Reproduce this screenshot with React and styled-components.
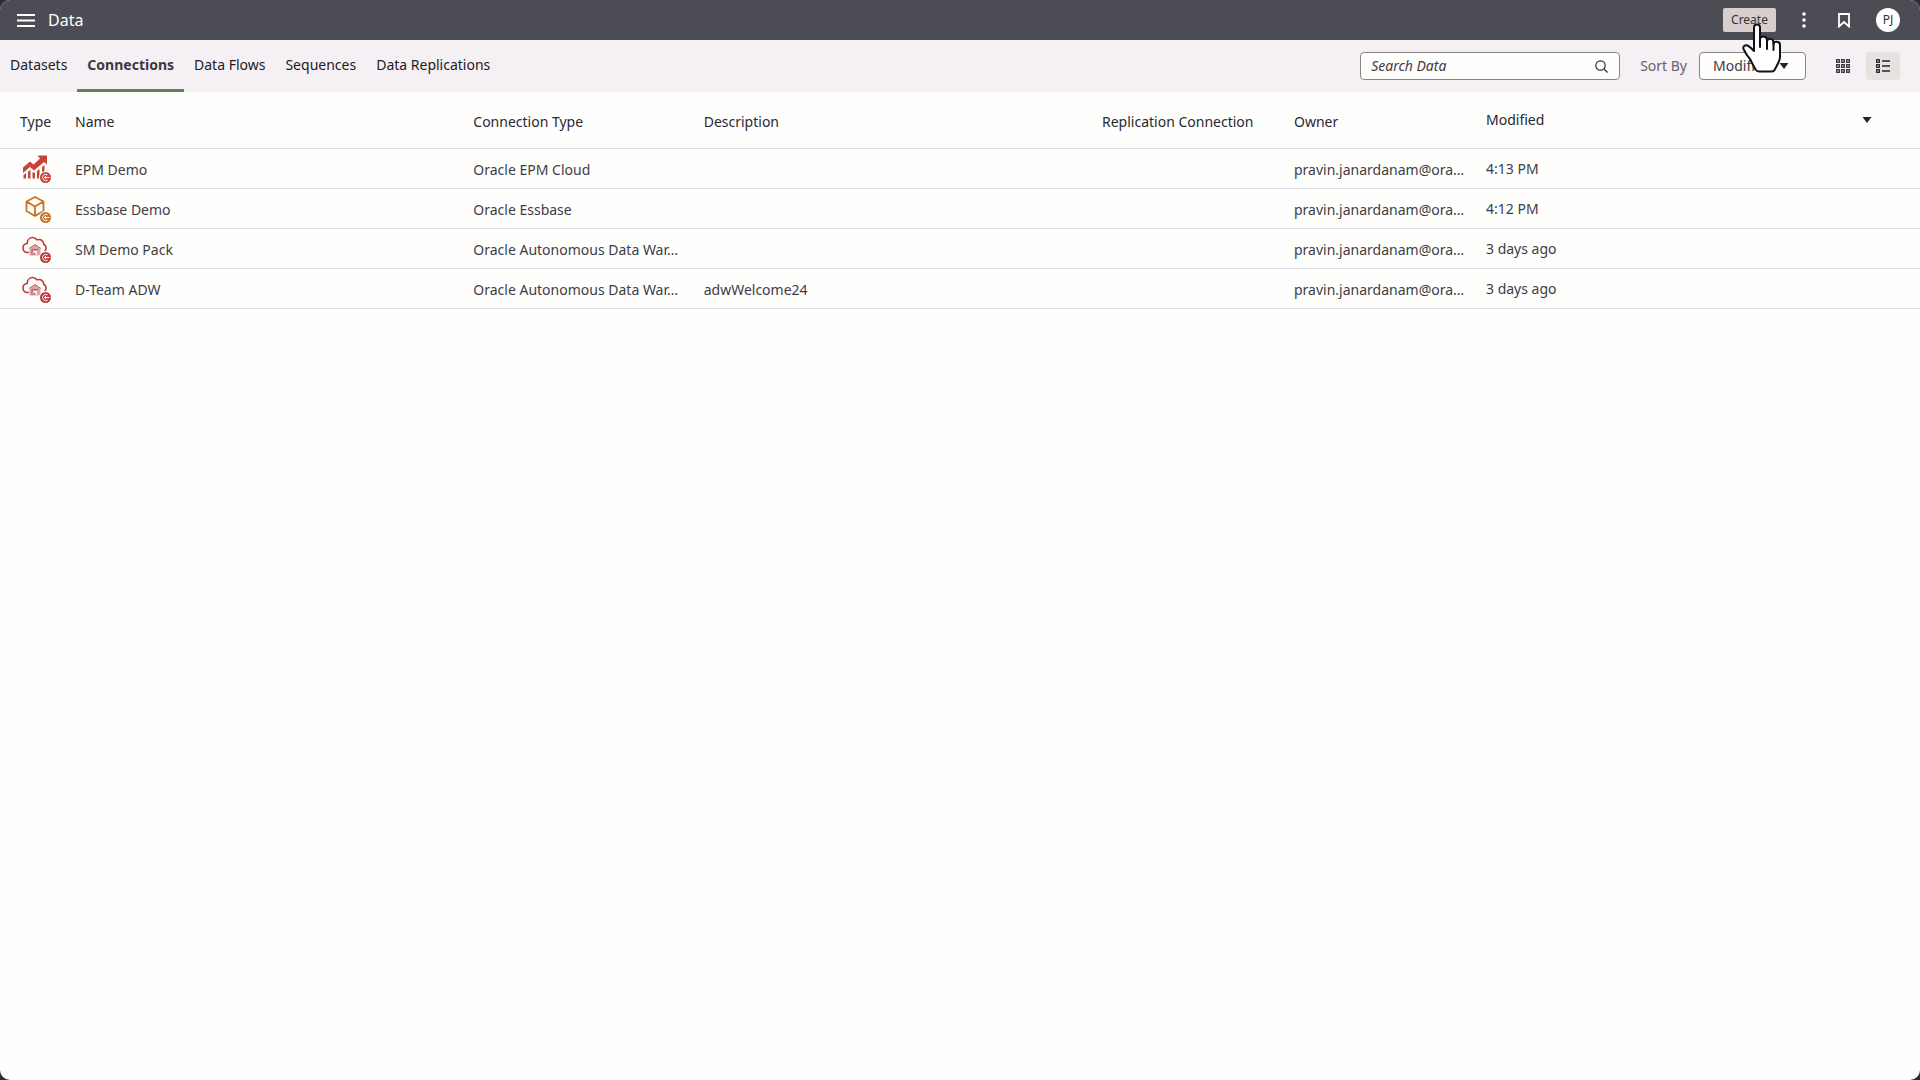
import React from "react";
import styled, { createGlobalStyle } from "styled-components";

const GlobalStyle = createGlobalStyle`
  *, *::before, *::after { box-sizing: border-box; }
  body {
    margin: 0;
    background: #2b2d35;
    color: #3f3d45;
    font-family: "Noto Sans", "Open Sans", sans-serif;
    font-size: 14px;
    line-height: 20px;
  }
  button, input, select { font: inherit; color: inherit; }
`;

const Page = styled.div`
  display: flex;
  flex-direction: column;
  min-height: 100vh;
  overflow: hidden;
  border-radius: 10px;
  background: #fefefd;
`;

const TopBar = styled.header`
  display: flex;
  align-items: center;
  justify-content: space-between;
  height: 40px;
  padding: 0 20px 0 16px;
  background: #4c4d54;
  color: #fff;
`;

const TitleGroup = styled.div`
  display: flex;
  align-items: center;
  gap: 12px;
`;

const Title = styled.h1`
  margin: 0;
  font-size: 16px;
  line-height: 24px;
  font-weight: 400;
`;

const Actions = styled.div`
  display: flex;
  align-items: center;
  gap: 16px;
`;

const IconButton = styled.button`
  display: flex;
  align-items: center;
  justify-content: center;
  width: ${(p) => p.$width || 24}px;
  height: ${(p) => p.$height || 24}px;
  padding: 0;
  border: 0;
  border-radius: 4px;
  background: ${(p) => (p.$selected ? "#e6e2df" : "transparent")};
`;

const CreateButton = styled.button`
  position: relative;
  width: 53px;
  height: 24px;
  padding: 0;
  border: 0;
  border-radius: 2px;
  background: #d6cfce;
  color: #33313a;
  font-size: 12px;
`;

const HandCursor = styled.svg`
  position: absolute;
  z-index: 2;
  top: 15px;
  left: 19px;
  pointer-events: none;
`;

const Avatar = styled.button`
  width: 24px;
  height: 24px;
  padding: 0;
  border: 0;
  border-radius: 50%;
  background: #fff;
  color: #33313a;
  font-size: 12px;
  margin-left: 4px;
`;

const TabBar = styled.div`
  display: flex;
  align-items: center;
  justify-content: space-between;
  height: 52px;
  padding-right: 20px;
  background: #f5f0f3;
`;

const Tabs = styled.nav`
  display: flex;
  align-self: stretch;
`;

const Tab = styled.a`
  display: flex;
  align-items: center;
  padding: 0 10px;
  border-bottom: 3px solid ${(p) => (p.$active ? "#678058" : "transparent")};
  color: ${(p) => (p.$active ? "#3b3942" : "#1d1b25")};
  font-weight: ${(p) => (p.$active ? 700 : 400)};
  text-decoration: none;
`;

const Tools = styled.div`
  display: flex;
  align-items: center;
  gap: 12px;
`;

const SearchBox = styled.div`
  display: flex;
  align-items: center;
  width: 260px;
  height: 28px;
  margin-right: 8px;
  padding: 0 11px 0 10px;
  border: 1px solid #8b8284;
  border-radius: 4px;
  background: #fefefd;
`;

const SearchInput = styled.input`
  flex: 1;
  min-width: 0;
  padding: 0;
  border: 0;
  outline: 0;
  background: transparent;
  &::placeholder { color: #3f3d45; font-style: italic; opacity: 1; }
`;

const SortLabel = styled.label`
  color: #66636b;
`;

const SelectWrap = styled.div`
  display: grid;
  align-items: center;
  width: 107px;
  > * { grid-area: 1 / 1; }
  > svg { justify-self: end; margin-right: 17px; pointer-events: none; }
`;

const SortSelect = styled.select`
  appearance: none;
  width: 100%;
  height: 28px;
  padding: 0 24px 0 13px;
  border: 1px solid #8b8284;
  border-radius: 4px;
  background: #fefefd;
`;

const ViewButtons = styled.div`
  display: flex;
  margin-left: 8px;
  gap: 6px;
`;

const Table = styled.table`
  width: 100%;
  table-layout: fixed;
  border-collapse: collapse;
`;

const Col = styled.col`
  width: ${(p) => p.$width};
`;

const HeadRow = styled.tr`
  height: 56px;
  border-bottom: 1px solid #dcdce8;
  color: #2a2832;
`;

const Row = styled.tr`
  height: 40px;
  border-bottom: 1px solid #e0e0e7;
`;

const cell = `
  padding: 4px 4px 0 10px;
  text-align: left;
  white-space: nowrap;
  font-weight: 400;
  &:first-child { padding: 4px 0 0 20px; }
  &:last-child { padding: 2px 48px 0 10px; }
`;

const HeadCell = styled.th`${cell}`;
const Cell = styled.td`${cell}`;

const SortHeading = styled.div`
  display: flex;
  align-items: center;
  justify-content: space-between;
  padding-bottom: 2px;
`;

const TypeIcon = styled.svg`
  display: block;
  margin-left: 2px;
`;

const Badge = ({ color }) => (
  <g>
    <circle cx="23.500" cy="23.500" r="6.500" fill="#fefefd" />
    <circle cx="23.500" cy="23.500" r="5.500" fill={color} />
    <path d="M25.500 20.800A3.200 3.200 0 1 0 25.500 26.200M27.500 23.500H22.500M24.200 21.900L22.500 23.500L24.200 25.100" fill="none" stroke="#fff" strokeWidth="1" />
  </g>
);

const icons = {
  epm: (
    <TypeIcon width="30" height="32" viewBox="0 0 30 32" role="img" aria-label="EPM Cloud">
      <g fill="#c84436">
        <path d="M1 13.500L8 7.500L11.500 10.500L18 4.500L15.500 1.500H25V10.500L22 8L12 16.500L8 13L1 19Z" />
        <path d="M1.500 21L4 19V24.500H1.500ZM6 17.500L8.500 16V24.500H6ZM10.500 18L13 19V24.500H10.500ZM15 17L17.500 15V24.500H15ZM20 13L22.500 11V24.500H20Z" />
      </g>
      <Badge color="#c84436" />
    </TypeIcon>
  ),
  essbase: (
    <TypeIcon width="30" height="32" viewBox="0 0 30 32" role="img" aria-label="Essbase">
      <path d="M13 3L21.500 7.500V17L13 22L4.500 17V7.500ZM4.500 7.500L13 12.500L21.500 7.500M13 12.500V22" fill="none" stroke="#cc7220" strokeWidth="1.800" strokeLinejoin="round" />
      <Badge color="#cc7220" />
    </TypeIcon>
  ),
  adw: (
    <TypeIcon width="30" height="32" viewBox="0 0 30 32" role="img" aria-label="Autonomous Data Warehouse">
      <path d="M7 18.500H5.500C2.500 18.500 1 16.300 1 14C1 11.500 2.800 9.700 5.200 9.500C5.200 6 7.500 3.500 10.500 3.500C12.300 3.500 13.800 4.400 14.800 5.800C18.500 4.600 21.500 6.600 21.800 10.300C24.600 12 24.800 15.500 22.500 17.500" fill="none" stroke="#c0393a" strokeWidth="1.600" />
      <path d="M7.500 14.500L13 10.500L18.500 14.500V21.500H7.500Z" fill="#dba3aa" />
      <path d="M7 14.500L13 10.500L19 14.500M10 21V15.500H16.500" fill="none" stroke="#c65c63" strokeWidth="1" />
      <path d="M11.500 17H15V21H11.500Z" fill="#f7e8ea" />
      <path d="M11.500 19H13.200V21H11.500Z" fill="#c65c63" />
      <Badge color="#bd3a3b" />
    </TypeIcon>
  ),
};

const Caret = () => (
  <svg width="10" height="6" viewBox="0 0 10 6" aria-hidden="true">
    <path d="M0.500 0H9.500L5 6Z" fill="#25232b" />
  </svg>
);

const tabs = ["Datasets", "Connections", "Data Flows", "Sequences", "Data Replications"];
const headings = ["Type", "Name", "Connection Type", "Description", "Replication Connection", "Owner"];
const owner = "pravin.janardanam@ora…";
const connections = [
  { icon: "epm", name: "EPM Demo", type: "Oracle EPM Cloud", description: "", modified: "4:13 PM" },
  { icon: "essbase", name: "Essbase Demo", type: "Oracle Essbase", description: "", modified: "4:12 PM" },
  { icon: "adw", name: "SM Demo Pack", type: "Oracle Autonomous Data War…", description: "", modified: "3 days ago" },
  { icon: "adw", name: "D-Team ADW", type: "Oracle Autonomous Data War…", description: "adwWelcome24", modified: "3 days ago" },
];

export default function App() {
  return (
    <Page>
      <GlobalStyle />
      <TopBar>
        <TitleGroup>
          <IconButton $width={20} aria-label="Navigator">
            <svg width="18" height="13" viewBox="0 0 18 13">
              <path d="M0 1H18M0 6.500H18M0 12H18" stroke="#fff" strokeWidth="2" />
            </svg>
          </IconButton>
          <Title>Data</Title>
        </TitleGroup>
        <Actions>
          <CreateButton>
            Create
            <HandCursor width="40" height="52" viewBox="0 0 40 52" aria-hidden="true">
              <path d="M12 28V4.500C12 .5 18 .5 18 4.500V17C18 12 25 12.500 25 17V19C25 14.500 31.500 15 31.500 19.500V21C32 17.500 38 18 38 22V34C38 38 36 39.500 34.500 43.500L32.500 47C32 48 31 48.500 30 48.500H17C15.500 48.500 14.500 48 13.500 46.500L9.500 39C8.500 36 7 34.500 4.500 31.500L1.500 26C.5 23.500 3 21.500 5.500 22.500C8 23.500 9 25 12 28Z" fill="#fff" stroke="#111" strokeWidth="2" strokeLinejoin="round" />
              <path d="M18 16V24M25 18V26M31.500 20V27" fill="none" stroke="#111" strokeWidth="2" strokeLinecap="round" />
            </HandCursor>
          </CreateButton>
          <IconButton aria-label="More actions">
            <svg width="4" height="16" viewBox="0 0 4 16" fill="#fff">
              <circle cx="2" cy="2" r="1.800" />
              <circle cx="2" cy="8" r="1.800" />
              <circle cx="2" cy="14" r="1.800" />
            </svg>
          </IconButton>
          <IconButton aria-label="Bookmark">
            <svg width="12" height="15" viewBox="0 0 12 15">
              <path d="M1 1H11V13.500L6 9L1 13.500Z" fill="none" stroke="#fff" strokeWidth="1.800" />
            </svg>
          </IconButton>
          <Avatar>PJ</Avatar>
        </Actions>
      </TopBar>
      <TabBar>
        <Tabs>
          {tabs.map((t) => (
            <Tab key={t} href="#" $active={t === "Connections"}>{t}</Tab>
          ))}
        </Tabs>
        <Tools>
          <SearchBox>
            <SearchInput type="text" placeholder="Search Data" aria-label="Search Data" />
            <svg width="13" height="13" viewBox="0 0 13 13" fill="none" stroke="#33313a" strokeWidth="1.200" aria-hidden="true">
              <circle cx="5.500" cy="5.500" r="4.700" />
              <path d="M9 9L12.500 12.500" />
            </svg>
          </SearchBox>
          <SortLabel htmlFor="sort">Sort By</SortLabel>
          <SelectWrap>
            <SortSelect id="sort" defaultValue="Modified">
              <option>Modified</option>
              <option>Name</option>
            </SortSelect>
            <Caret />
          </SelectWrap>
          <ViewButtons>
            <IconButton $width={34} $height={28} aria-label="Grid view">
              <svg width="14" height="14" viewBox="0 0 14 14" fill="none" stroke="#33313a" strokeWidth="1.300">
                {[0, 5, 10].map((y) => [0, 5, 10].map((x) => (
                  <rect key={x + "-" + y} x={x + 0.7} y={y + 0.7} width="2.600" height="2.600" />
                )))}
              </svg>
            </IconButton>
            <IconButton $width={34} $height={28} $selected aria-label="List view">
              <svg width="14" height="14" viewBox="0 0 14 14" fill="none" stroke="#25232b" strokeWidth="1.300">
                {[0, 5, 10].map((y) => (
                  <g key={y}>
                    <rect x="0.700" y={y + 0.7} width="2.600" height="2.600" />
                    <path d={`M6 ${y + 2}H14`} />
                  </g>
                ))}
              </svg>
            </IconButton>
          </ViewButtons>
        </Tools>
      </TabBar>
      <Table>
        <colgroup>
          <Col $width="65px" />
          <Col />
          <Col $width="12%" />
          <Col />
          <Col $width="10%" />
          <Col $width="10%" />
          <Col $width="444px" />
        </colgroup>
        <thead>
          <HeadRow>
            {headings.map((h) => <HeadCell key={h} scope="col">{h}</HeadCell>)}
            <HeadCell scope="col" aria-sort="descending">
              <SortHeading>Modified <Caret /></SortHeading>
            </HeadCell>
          </HeadRow>
        </thead>
        <tbody>
          {connections.map((c) => (
            <Row key={c.name}>
              <Cell>{icons[c.icon]}</Cell>
              <Cell>{c.name}</Cell>
              <Cell>{c.type}</Cell>
              <Cell>{c.description}</Cell>
              <Cell />
              <Cell>{owner}</Cell>
              <Cell>{c.modified}</Cell>
            </Row>
          ))}
        </tbody>
      </Table>
    </Page>
  );
}
